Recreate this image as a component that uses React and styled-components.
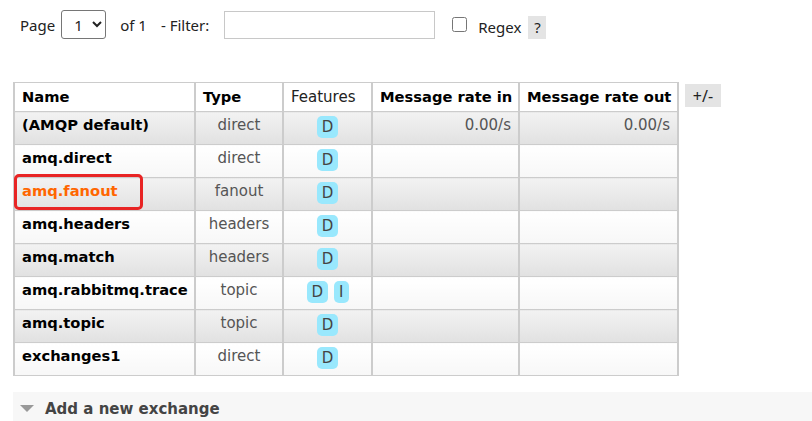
import React from "react";
import styled, { createGlobalStyle } from "styled-components";

const GlobalStyle = createGlobalStyle`
  html, body {
    margin: 0;
    padding: 0;
    background: #fff;
  }
  body {
    font-family: "DejaVu Sans", Verdana, sans-serif;
    color: #484848;
  }
`;

const exchanges = [
  { name: "(AMQP default)", type: "direct", features: ["D"], rateIn: "0.00/s", rateOut: "0.00/s" },
  { name: "amq.direct", type: "direct", features: ["D"] },
  { name: "amq.fanout", type: "fanout", features: ["D"], marked: true },
  { name: "amq.headers", type: "headers", features: ["D"] },
  { name: "amq.match", type: "headers", features: ["D"] },
  { name: "amq.rabbitmq.trace", type: "topic", features: ["D", "I"] },
  { name: "amq.topic", type: "topic", features: ["D"] },
  { name: "exchanges1", type: "direct", features: ["D"] },
];

const columns = [
  { key: "name", label: "Name", width: 181, bold: true },
  { key: "type", label: "Type", width: 88, bold: true },
  { key: "features", label: "Features", width: 89, bold: false },
  { key: "rateIn", label: "Message rate in", width: 147, bold: true },
  { key: "rateOut", label: "Message rate out", width: 159, bold: true },
];

const App = () => {
  return (
    <Page>
      <GlobalStyle />
      <FilterBar>
        <BarText>Page</BarText>
        <PageSelect defaultValue="1">
          <option value="1">1</option>
        </PageSelect>
        <BarText $gap={14}>of 1</BarText>
        <BarText $gap={14}>- Filter:</BarText>
        <FilterInput type="text" />
        <Check type="checkbox" />
        <BarText $gap={11} $low>Regex</BarText>
        <Help>?</Help>
      </FilterBar>

      <TableArea>
        <List>
          <colgroup>
            {columns.map((c) => (
              <col key={c.key} style={{ width: c.width }} />
            ))}
          </colgroup>
          <thead>
            <tr>
              {columns.map((c) => (
                <Th key={c.key} $bold={c.bold}>{c.label}</Th>
              ))}
            </tr>
          </thead>
          <tbody>
            {exchanges.map((ex, i) => (
              <Row key={ex.name} $alt={i % 2 === 0}>
                <NameCell>
                  <Name $active={ex.marked}>{ex.name}</Name>
                  {ex.marked && <Marker />}
                </NameCell>
                <Td $align="center">{ex.type}</Td>
                <FeatureCell>
                  {ex.features.map((f) => (
                    <Badge key={f}>{f}</Badge>
                  ))}
                </FeatureCell>
                <Td $align="right">{ex.rateIn || ""}</Td>
                <Td $align="right">{ex.rateOut || ""}</Td>
              </Row>
            ))}
          </tbody>
        </List>
        <PlusMinus>+/-</PlusMinus>
      </TableArea>

      <Section>
        <svg width="14" height="8" viewBox="0 0 14 8">
          <polygon points="0,0 14,0 7,7" fill="#999" />
        </svg>
        <SectionTitle>Add a new exchange</SectionTitle>
      </Section>
    </Page>
  );
};

export default App;

const Page = styled.div`
  width: 812px;
  height: 421px;
  overflow: hidden;
`;

const FilterBar = styled.div`
  display: flex;
  align-items: center;
  height: 29px;
  padding: 10px 0 0 20px;
  font-family: "Noto Sans", "Open Sans", sans-serif;
  font-size: 15px;
  color: #222;
`;

const BarText = styled.span`
  margin-left: ${(p) => p.$gap || 0}px;
  margin-top: ${(p) => (p.$low ? 4 : 0)}px;
  white-space: nowrap;
`;

const PageSelect = styled.select`
  margin-left: 6px;
  width: 45px;
  height: 29px;
  border: 1px solid #767676;
  border-radius: 3px;
  background: #fff;
  font-family: "Noto Sans", sans-serif;
  font-size: 15px;
  color: #222;
  padding: 0 4px 0 8px;
`;

const FilterInput = styled.input`
  margin-left: 15px;
  width: 211px;
  height: 28px;
  box-sizing: border-box;
  border: 1px solid #c8c8c8;
  outline: none;
`;

const Check = styled.input`
  margin: 0 0 0 17px;
  width: 15px;
  height: 15px;
`;

const Help = styled.span`
  margin: 5px 0 0 7px;
  width: 18px;
  height: 23px;
  display: flex;
  align-items: center;
  justify-content: center;
  background: #e4e4e4;
  color: #222;
`;

const TableArea = styled.div`
  display: flex;
  align-items: flex-start;
  margin: 43px 0 0 13px;
`;

const List = styled.table`
  border-collapse: collapse;
  table-layout: fixed;
  width: 664px;
  font-size: 15px;
  line-height: 18px;
`;

const Th = styled.th`
  height: 29px;
  box-sizing: border-box;
  padding: 5px 7px 0;
  vertical-align: top;
  text-align: left;
  font-weight: ${(p) => (p.$bold ? 700 : 400)};
  font-size: ${(p) => (p.$bold ? "14.7px" : "15px")};
  color: ${(p) => (p.$bold ? "#000" : "#222")};
  white-space: nowrap;
  border: 1px solid #ccc;
  border-left-width: 2px;
  border-right-width: 2px;
  background: #fff;
`;

const Row = styled.tr`
  & > td {
    background: ${(p) =>
      p.$alt
        ? "linear-gradient(to bottom, #f2f2f2 0%, #e1e1e1 100%)"
        : "linear-gradient(to bottom, #ffffff 0%, #f7f7f7 100%)"};
  }
`;

const Td = styled.td`
  height: 33px;
  box-sizing: border-box;
  padding: 4px 7px 0;
  vertical-align: top;
  text-align: ${(p) => p.$align || "left"};
  color: #555;
  white-space: nowrap;
  border: 1px solid #ccc;
  border-left-width: 2px;
  border-right-width: 2px;
`;

const NameCell = styled(Td)`
  position: relative;
`;

const Name = styled.span`
  font-weight: 700;
  font-size: 14.7px;
  color: ${(p) => (p.$active ? "#f60" : "#000")};
`;

const Marker = styled.span`
  position: absolute;
  z-index: 2;
  left: -1px;
  top: -4px;
  width: 123px;
  height: 30px;
  border: 3px solid #e82424;
  border-radius: 5px;
  pointer-events: none;
`;

const FeatureCell = styled(Td)`
  text-align: center;
  padding-top: 4px;
`;

const Badge = styled.span`
  display: inline-flex;
  align-items: center;
  justify-content: center;
  height: 22px;
  padding: 0 5px;
  margin: 0 3px;
  border-radius: 5px;
  background: #99e8fd;
  color: #444;
  font-size: 15px;
`;

const PlusMinus = styled.span`
  margin: 2px 0 0 6px;
  width: 36px;
  height: 23px;
  display: flex;
  align-items: center;
  justify-content: center;
  background: #e4e4e4;
  color: #222;
  font-family: "Noto Sans", sans-serif;
  font-size: 16px;
`;

const Section = styled.div`
  display: flex;
  align-items: center;
  gap: 11px;
  margin: 16px 0 0 13px;
  padding: 8px 7px 12px;
  background: #f7f7f7;
`;

const SectionTitle = styled.span`
  font-weight: 700;
  font-size: 15px;
  color: #444;
`;
